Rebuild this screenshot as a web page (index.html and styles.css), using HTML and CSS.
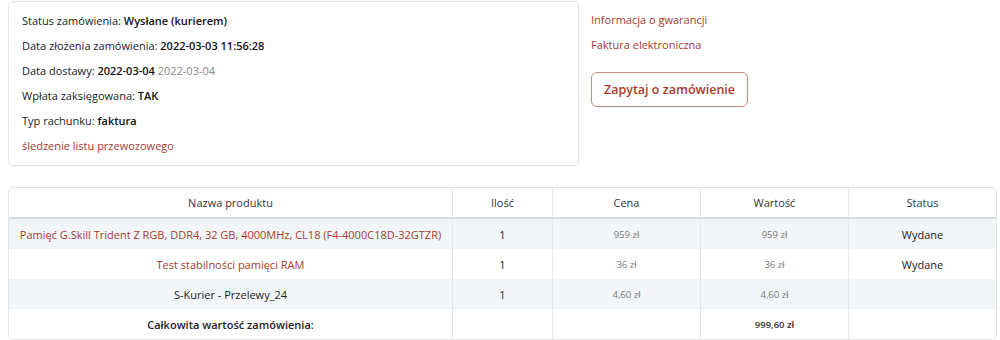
FILE: index.html
```html
<!DOCTYPE html>
<html lang="pl">
<head>
    <meta charset="UTF-8">
    <meta name="viewport" content="width=device-width, initial-scale=1.0">
    <title>Zamówienie</title>
    <link rel="stylesheet" href="styles.css">
</head>
<body>
    <div class="order">
        <div class="order-top">
            <div class="order-info">
                <p>Status zamówienia: <b>Wysłane (kurierem)</b></p>
                <p>Data złożenia zamówienia: <b>2022-03-03 11:56:28</b></p>
                <p>Data dostawy: <b>2022-03-04</b> <span class="muted">2022-03-04</span></p>
                <p>Wpłata zaksięgowana: <b>TAK</b></p>
                <p>Typ rachunku: <b>faktura</b></p>
                <p><a href="#">śledzenie listu przewozowego</a></p>
            </div>
            <div class="order-links">
                <a href="#">Informacja o gwarancji</a>
                <a href="#">Faktura elektroniczna</a>
                <button class="ask-btn">Zapytaj o zamówienie</button>
            </div>
        </div>

        <table class="products">
            <thead>
                <tr>
                    <th class="col-name">Nazwa produktu</th>
                    <th class="col-qty">Ilość</th>
                    <th class="col-price">Cena</th>
                    <th class="col-price">Wartość</th>
                    <th>Status</th>
                </tr>
            </thead>
            <tbody>
                <tr>
                    <td><a href="#">Pamięć G.Skill Trident Z RGB, DDR4, 32 GB, 4000MHz, CL18 (F4-4000C18D-32GTZR)</a></td>
                    <td>1</td>
                    <td class="price">959 zł</td>
                    <td class="price">959 zł</td>
                    <td>Wydane</td>
                </tr>
                <tr>
                    <td><a href="#">Test stabilności pamięci RAM</a></td>
                    <td>1</td>
                    <td class="price">36 zł</td>
                    <td class="price">36 zł</td>
                    <td>Wydane</td>
                </tr>
                <tr>
                    <td>S-Kurier - Przelewy_24</td>
                    <td>1</td>
                    <td class="price">4,60 zł</td>
                    <td class="price">4,60 zł</td>
                    <td></td>
                </tr>
                <tr>
                    <td><b>Całkowita wartość zamówienia:</b></td>
                    <td></td>
                    <td></td>
                    <td class="price"><b>999,60 zł</b></td>
                    <td></td>
                </tr>
            </tbody>
        </table>
    </div>
</body>
</html>
```

FILE: styles.css
```css
body {
    margin: 0;
    background-color: #fff;
    font-family: "Open Sans", Arial, sans-serif;
    font-size: 11px;
    color: #222;
}

a {
    color: #a63a30;
    text-decoration: none;
}

.order {
    width: 989px;
    padding: 1px 0 0 8px;
}

.order-top {
    display: flex;
    gap: 12px;
}

.order-info {
    width: 543px;
    padding: 6px 13px 7px;
    border: 1px solid #e4e4e4;
    border-radius: 5px;
    box-shadow: 0 1px 2px rgba(0, 0, 0, 0.04);
}

.order-info p {
    margin: 0;
    height: 25px;
    line-height: 25px;
}

.order-info b {
    font-weight: 600;
    color: #111;
}

.muted {
    color: #8a8a8a;
}

.order-links {
    display: flex;
    flex-direction: column;
    align-items: flex-start;
    padding-top: 6px;
}

.order-links a {
    height: 25px;
    line-height: 25px;
}

.ask-btn {
    margin-top: 15px;
    height: 35px;
    padding: 0 12px;
    font-family: inherit;
    font-size: 12.5px;
    font-weight: 600;
    color: #a63a30;
    background: #fff;
    border: 1px solid #c98a84;
    border-radius: 6px;
    cursor: pointer;
}

.products {
    width: 989px;
    margin-top: 21px;
    border-collapse: separate;
    border-spacing: 0;
    border: 1px solid #e4e4e4;
    border-radius: 5px;
    table-layout: fixed;
    text-align: center;
}

.products th {
    font-weight: 400;
    color: #333;
    height: 29px;
    padding-top: 0;
    padding-bottom: 0;
    border-bottom: 2px solid #d5dadd;
}

.products th,
.products td {
    padding-left: 6px;
    padding-right: 6px;
    border-left: 1px solid #e8e8e8;
    white-space: nowrap;
}

.products th:first-child,
.products td:first-child {
    border-left: none;
}

.products td {
    height: 30px;
    padding-top: 0;
    padding-bottom: 0;
}

.products tbody tr:nth-child(odd) td {
    background-color: #f2f6f8;
}

.col-name {
    width: 431px;
}

.col-qty {
    width: 87px;
}

.col-price {
    width: 135px;
}

.price {
    font-size: 9.5px;
    color: #777;
}

.price b {
    font-weight: 600;
    color: #333;
}

.products td b {
    font-weight: 600;
}
```
